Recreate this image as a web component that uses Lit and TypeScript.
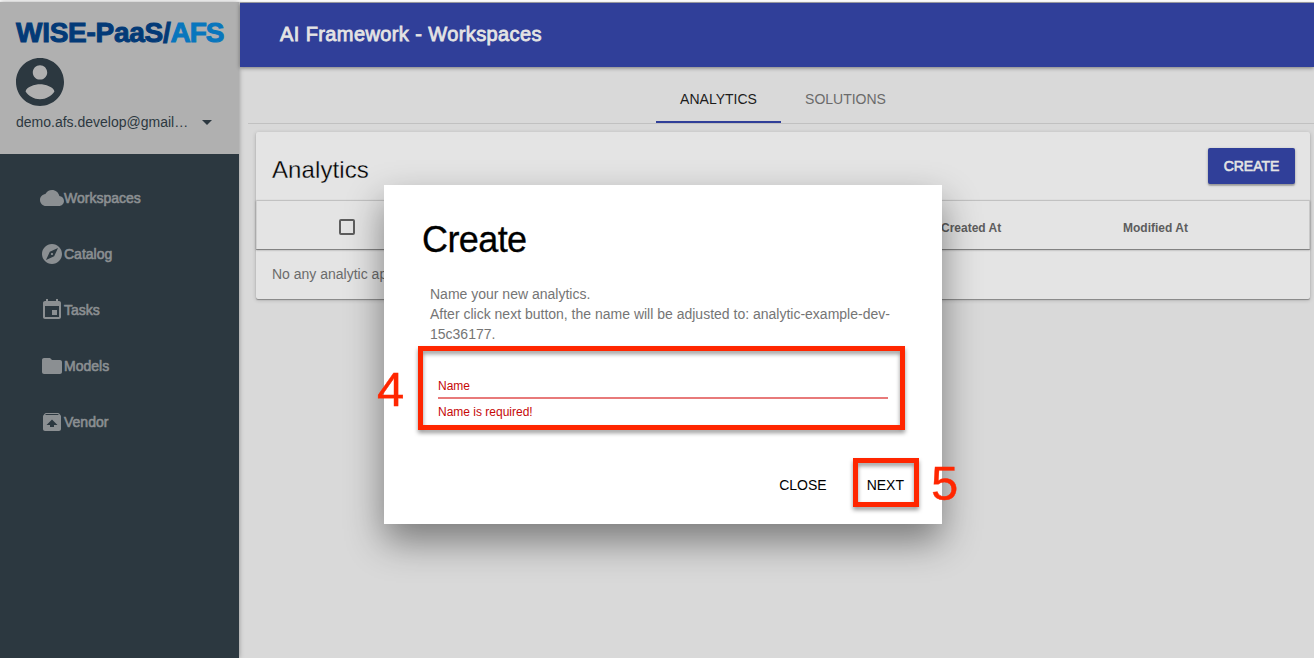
import { LitElement, html, css, svg } from "lit";
import { customElement } from "lit/decorators.js";

const ICONS: Record<string, string> = {
  cloud: "M19.35 10.04C18.67 6.59 15.64 4 12 4 9.11 4 6.6 5.64 5.35 8.04 2.34 8.36 0 10.91 0 14c0 3.31 2.69 6 6 6h13c2.76 0 5-2.24 5-5 0-2.64-2.05-4.78-4.65-4.96z",
  explore: "M12 10.9c-.61 0-1.1.49-1.1 1.1s.49 1.1 1.1 1.1c.61 0 1.1-.49 1.1-1.1s-.49-1.1-1.1-1.1zM12 2C6.48 2 2 6.48 2 12s4.48 10 10 10 10-4.48 10-10S17.52 2 12 2zm2.19 12.19L6 18l3.81-8.19L18 6l-3.81 8.19z",
  event: "M17 12h-5v5h5v-5zM16 1v2H8V1H6v2H5c-1.11 0-1.99.9-1.99 2L3 19c0 1.1.89 2 2 2h14c1.1 0 2-.9 2-2V5c0-1.1-.9-2-2-2h-1V1h-2zm3 18H5V8h14v11z",
  folder: "M10 4H4c-1.1 0-1.99.9-1.99 2L2 18c0 1.1.9 2 2 2h16c1.1 0 2-.9 2-2V8c0-1.1-.9-2-2-2h-8l-2-2z",
  unarchive: "M20.55 5.22l-1.39-1.68C18.88 3.21 18.47 3 18 3H6c-.47 0-.88.21-1.15.55L3.46 5.22C3.17 5.57 3 6.01 3 6.5V19c0 1.1.89 2 2 2h14c1.1 0 2-.9 2-2V6.5c0-.49-.17-.93-.45-1.28zM12 9.5l5.5 5.5H14v2h-4v-2H6.5L12 9.5zM5.12 5l.82-1h12l.93 1H5.12z",
  account: "M12 2C6.48 2 2 6.48 2 12s4.48 10 10 10 10-4.48 10-10S17.52 2 12 2zm0 3c1.66 0 3 1.34 3 3s-1.34 3-3 3-3-1.34-3-3 1.34-3 3-3zm0 14.200c-2.500 0-4.710-1.280-6-3.220.030-1.990 4-3.080 6-3.080 1.990 0 5.970 1.090 6 3.080-1.290 1.940-3.500 3.220-6 3.220z",
};

const icon = (name: string, box = "0 0 24 24") =>
  html`<svg viewBox=${box} fill="currentColor">${svg`<path d=${ICONS[name]}></path>`}</svg>`;

@customElement("side-nav")
class SideNav extends LitElement {
  static styles = css`
    :host { display: flex; flex-direction: column; width: 239px; background: #2c3840; color: #8b8f92; }
    svg { display: block; }
    .account { box-sizing: border-box; height: 152px; padding: 15px 16px 0; background: #b0b0b0; color: #2c3840; }
    .logo { height: 32px; font: bold 28px/32px "Liberation Sans", Arial, sans-serif; letter-spacing: -0.27px; color: #033a77; -webkit-text-stroke: 1px currentColor; white-space: nowrap; }
    .logo .product { letter-spacing: -1px; color: #0876bd; -webkit-text-stroke-color: #0876bd; }
    .avatar { width: 48px; height: 48px; margin-top: 9px; }
    .user { display: flex; align-items: center; justify-content: space-between; height: 20px; margin-top: 6px; padding-right: 11px; font-size: 14px; line-height: 20px; }
    .caret { border: 5px solid transparent; border-top-color: currentColor; border-bottom: 0; margin-top: 1px; }
    .menu { padding-top: 16px; }
    .item { display: flex; align-items: center; height: 56px; padding-left: 40px; font-size: 14px; -webkit-text-stroke: 0.6px currentColor; }
    .item svg { width: 24px; height: 24px; stroke: none; }
  `;
  items = [["cloud", "Workspaces"], ["explore", "Catalog"], ["event", "Tasks"], ["folder", "Models"], ["unarchive", "Vendor"]];
  render() {
    return html`
      <div class="account">
        <div class="logo">WISE-PaaS/<span class="product">AFS</span></div>
        <div class="avatar">${icon("account", "2 2 20 20")}</div>
        <div class="user"><span>demo.afs.develop@gmail…</span><span class="caret"></span></div>
      </div>
      <nav class="menu">
        ${this.items.map(([i, label]) => html`<div class="item">${icon(i)}<span>${label}</span></div>`)}
      </nav>`;
  }
}

@customElement("analytics-card")
class AnalyticsCard extends LitElement {
  static styles = css`
    :host { display: block; height: 167px; border-radius: 2px; background: #e4e4e4; box-shadow: 0 1px 4px rgba(0,0,0,.2), 0 1px 1px rgba(0,0,0,.3); }
    .toolbar { display: flex; justify-content: space-between; height: 68px; padding: 0 15px 0 16px; }
    .title { font-size: 24px; line-height: 28px; margin-top: 24px; color: #000; letter-spacing: .1px; -webkit-text-stroke: 0.3px #e4e4e4; }
    .create { width: 87px; height: 36px; margin-top: 16px; border-radius: 2px; background: #303f99; color: #e4e4e4; font-size: 14px; line-height: 36px; text-align: center; -webkit-text-stroke: 0.6px currentColor; box-shadow: 0 1px 3px rgba(0,0,0,.3), 0 2px 1px rgba(0,0,0,.15); }
    .head { display: grid; grid-template-columns: 83px 601px 182px 1fr; align-items: center; box-sizing: border-box; height: 49px; border-top: 1px solid #c1c1c1; border-left: 1px solid #d0d0d0; border-right: 1px solid #c8c8c8; box-shadow: 0 1px 2px rgba(0,0,0,.35), 0 1px 0 rgba(0,0,0,.25); font-size: 12px; font-weight: bold; color: #5d5d5d; }
    .head span { padding-top: 6px; }
    .check { grid-column: 2; box-sizing: border-box; width: 16px; height: 16px; margin: 4px 0 0 -1px; border: 2px solid #5d5d5d; border-radius: 2px; }
    .empty { padding: 15px 16px; font-size: 14px; line-height: 20px; color: #6b6b6b; }
  `;
  render() {
    return html`
      <div class="toolbar"><div class="title">Analytics</div><div class="create">CREATE</div></div>
      <div class="head"><div class="check"></div><span>Created At</span><span>Modified At</span></div>
      <div class="empty">No any analytic app.</div>`;
  }
}

@customElement("create-dialog")
class CreateDialog extends LitElement {
  static styles = css`
    :host { display: flex; flex-direction: column; box-sizing: border-box; padding: 0 38px; background: #fff; box-shadow: 0 17px 35px rgba(0,0,0,.44); }
    .title { margin-top: 35px; font-size: 36px; line-height: 40px; letter-spacing: -.6px; color: #000; -webkit-text-stroke: 0.3px currentColor; }
    .copy { margin: 24px 8px 0; font-size: 14px; line-height: 20px; color: #757575; white-space: nowrap; }
    .field { margin: 34px 16px 0; font-size: 12px; line-height: 16px; color: #c60808; }
    .label { height: 21px; border-bottom: 2px solid #e87a7a; box-sizing: border-box; }
    .error { margin-top: 5px; }
    .actions { display: flex; gap: 40px; margin-top: 55px; justify-content: flex-end; font-size: 14px; line-height: 20px; color: #000; }
  `;
  render() {
    return html`
      <div class="title">Create</div>
      <div class="copy">Name your new analytics.<br />After click next button, the name will be adjusted to: analytic-example-dev-<br />15c36177.</div>
      <div class="field"><div class="label">Name</div><div class="error">Name is required!</div></div>
      <div class="actions"><span>CLOSE</span><span>NEXT</span></div>`;
  }
}

@customElement("app-root")
class AppRoot extends LitElement {
  static styles = css`
    :host { display: flex; position: relative; box-sizing: border-box; width: 100%; height: 658px; padding-top: 2px; overflow: hidden; background: linear-gradient(#fff 2px, #d9d9d9 2px); font-family: "Liberation Sans", Arial, sans-serif; }
    .side { flex: none; box-shadow: 0 0 5px rgba(0,0,0,.35); }
    .main { flex: 1; margin-left: 1px; min-width: 0; border-top: 1px solid #a9a9b0; }
    .bar { height: 64px; padding-left: 40px; background: #303f99; color: #e4e4e4; font-size: 20px; line-height: 62px; -webkit-text-stroke: 0.8px currentColor; box-shadow: 0 1px 4px rgba(0,0,0,.45); letter-spacing: .4px; }
    .tabs { display: flex; justify-content: center; height: 56px; margin-left: 8px; padding-left: 4px; border-bottom: 1px solid #c1c1c1; color: #6b6b6b; font-size: 14px; }
    .tab { box-sizing: border-box; width: 129px; text-align: center; line-height: 64px; }
    .active { width: 125px; color: #1c1c1c; border-bottom: 2px solid #303f99; }
    .card { margin: 8px 4px 0 16px; }
    .dialog { position: absolute; left: 384px; top: 185px; width: 558px; height: 339px; }
    .mark { position: absolute; box-sizing: border-box; border: 5px solid #ff2600; filter: drop-shadow(0 3px 2px rgba(0,0,0,.4)); }
    .field-mark { left: 418px; top: 346px; width: 487px; height: 84px; }
    .next-mark { left: 853px; top: 458px; width: 66px; height: 49px; }
    .step { position: absolute; font-size: 49px; line-height: 50px; color: #ff2600; -webkit-text-stroke: 0.4px currentColor; }
    .four { left: 377px; top: 364px; }
    .five { left: 931px; top: 458px; }
  `;
  render() {
    return html`
      <side-nav class="side"></side-nav>
      <main class="main">
        <div class="bar">AI Framework - Workspaces</div>
        <div class="tabs"><div class="tab active">ANALYTICS</div><div class="tab">SOLUTIONS</div></div>
        <analytics-card class="card"></analytics-card>
      </main>
      <create-dialog class="dialog"></create-dialog>
      <div class="mark field-mark"></div>
      <div class="mark next-mark"></div>
      <div class="step four">4</div>
      <div class="step five">5</div>`;
  }
}
